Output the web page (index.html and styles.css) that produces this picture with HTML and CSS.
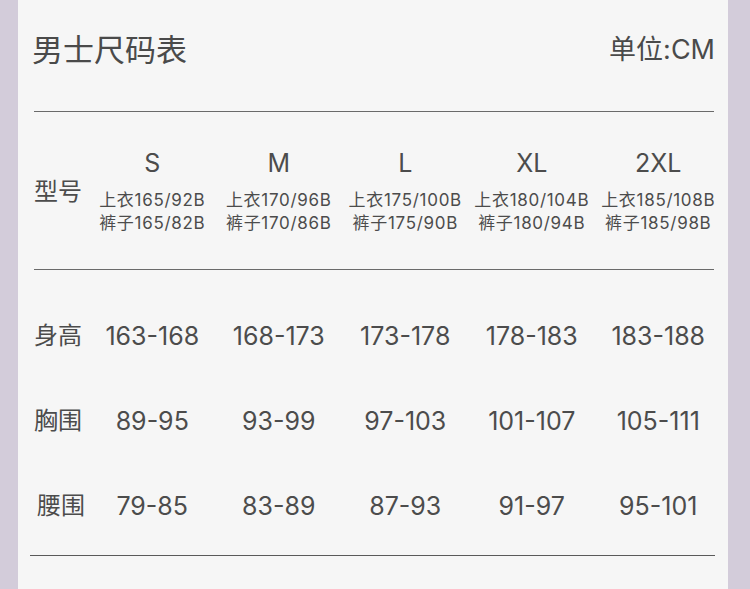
FILE: index.html
```html
<!DOCTYPE html>
<html lang="zh-CN">
<head>
<meta charset="utf-8">
<link rel="stylesheet" href="styles.css">
</head>
<body>
<div class="page">
  <div class="strip strip-left"></div>
  <main class="card">
    <header class="head">
      <h1 class="title">男士尺码表</h1>
      <span class="unit">单位:CM</span>
    </header>
    <section class="sizes">
      <div class="label">型号</div>
      <div class="size"><div class="name">S</div><div class="sub">上衣165/92B</div><div class="sub">裤子165/82B</div></div>
      <div class="size"><div class="name">M</div><div class="sub">上衣170/96B</div><div class="sub">裤子170/86B</div></div>
      <div class="size"><div class="name">L</div><div class="sub">上衣175/100B</div><div class="sub">裤子175/90B</div></div>
      <div class="size"><div class="name">XL</div><div class="sub">上衣180/104B</div><div class="sub">裤子180/94B</div></div>
      <div class="size"><div class="name">2XL</div><div class="sub">上衣185/108B</div><div class="sub">裤子185/98B</div></div>
    </section>
    <section class="data">
      <div class="row">
        <div class="label">身高</div>
        <div class="val">163-168</div><div class="val">168-173</div><div class="val">173-178</div><div class="val">178-183</div><div class="val">183-188</div>
      </div>
      <div class="row">
        <div class="label">胸围</div>
        <div class="val">89-95</div><div class="val">93-99</div><div class="val">97-103</div><div class="val">101-107</div><div class="val">105-111</div>
      </div>
      <div class="row">
        <div class="label label-shift">腰围</div>
        <div class="val">79-85</div><div class="val">83-89</div><div class="val">87-93</div><div class="val">91-97</div><div class="val">95-101</div>
      </div>
    </section>
  </main>
  <div class="strip strip-right"></div>
</div>
</body>
</html>
```

FILE: styles.css
```css
html, body {
  margin: 0;
  padding: 0;
}
body {
  background: #d3ccda;
  font-family: Inter, "Noto Sans CJK SC", sans-serif;
  color: #4c4c4c;
}
.page {
  display: flex;
  width: 750px;
  height: 589px;
  overflow: hidden;
}
.strip-left { width: 18px; flex: none; }
.strip-right { width: 22px; flex: none; }
.card {
  width: 710px;
  flex: none;
  background: #f6f6f6;
  padding: 0 14px 0 16px;
  box-sizing: border-box;
}
.head {
  display: flex;
  justify-content: space-between;
  align-items: center;
  height: 112px;
  padding: 30px 0 42px;
  box-sizing: border-box;
  border-bottom: 1px solid #6a6a6a;
}
.title {
  margin: 0 0 0 -2px;
  font-size: 31px;
  font-weight: 400;
  line-height: 40px;
  color: #4a4a4a;
}
.unit {
  font-size: 27px;
  line-height: 40px;
  color: #4a4a4a;
  margin-right: -1px;
}
.sizes {
  display: grid;
  grid-template-columns: 55px repeat(5, 126.5px);
  align-items: center;
  padding: 36px 0 34px;
  border-bottom: 1px solid #6a6a6a;
}
.label {
  font-size: 24px;
  line-height: 30px;
  white-space: nowrap;
}
.size {
  text-align: center;
  white-space: nowrap;
}
.name {
  font-size: 25px;
  line-height: 30px;
  margin-bottom: 11px;
}
.sub {
  font-size: 17px;
  line-height: 23px;
  letter-spacing: 0.7px;
}
.data {
  padding: 23px 0 7px;
  margin: 0 -1px 0 -4px;
  padding-left: 4px;
  padding-right: 1px;
  border-bottom: 1px solid #5a5a5a;
}
.row {
  display: grid;
  grid-template-columns: 55px repeat(5, 126.5px);
  align-items: center;
  height: 85px;
}
.label-shift {
  padding-left: 3px;
}
.val {
  text-align: center;
  font-size: 25px;
  line-height: 34px;
  white-space: nowrap;
}
```
